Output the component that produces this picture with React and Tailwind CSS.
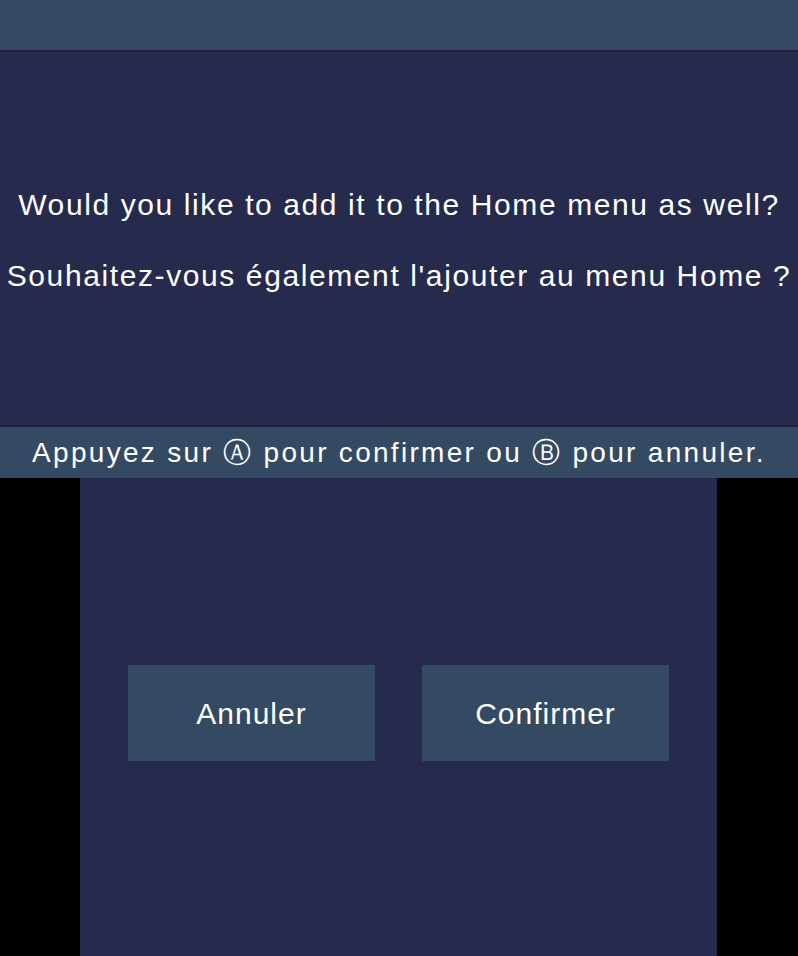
export default function App() {
  const font = { fontFamily: '"Liberation Sans", Arial, sans-serif' };
  return (
    <div className="w-[798px] h-[956px] bg-black flex flex-col text-white" style={font}>
      {/* top screen */}
      <div className="h-[50px] bg-[#344a62]" />
      <div className="h-[2px] bg-[#1d2139]" />
      <div className="h-[373px] bg-[#262b4d] pt-[3px] flex flex-col items-center justify-center gap-[37px] text-[30px] tracking-[1.6px] leading-[34px]">
        <p className="whitespace-nowrap">Would you like to add it to the Home menu as well?</p>
        <p className="whitespace-nowrap">Souhaitez-vous également l'ajouter au menu Home ?</p>
      </div>
      <div className="h-[2px] bg-[#1d2139]" />
      <div className="h-[51px] bg-[#344a62] pt-[1px] flex items-center justify-center text-[28px] tracking-[2.3px] whitespace-nowrap">
        Appuyez sur Ⓐ pour confirmer ou Ⓑ pour annuler.
      </div>

      {/* bottom screen */}
      <div className="flex-1 flex pl-[80px]">
        <div className="w-[637px] bg-[#262b4d] pt-[187px] px-[48px] flex gap-[47px] items-start">
          {["Annuler", "Confirmer"].map(label => (
            <button key={label} className="w-[247px] h-[96px] bg-[#344a62] text-[30px] tracking-[1px] text-white">
              {label}
            </button>
          ))}
        </div>
      </div>
    </div>
  );
}
